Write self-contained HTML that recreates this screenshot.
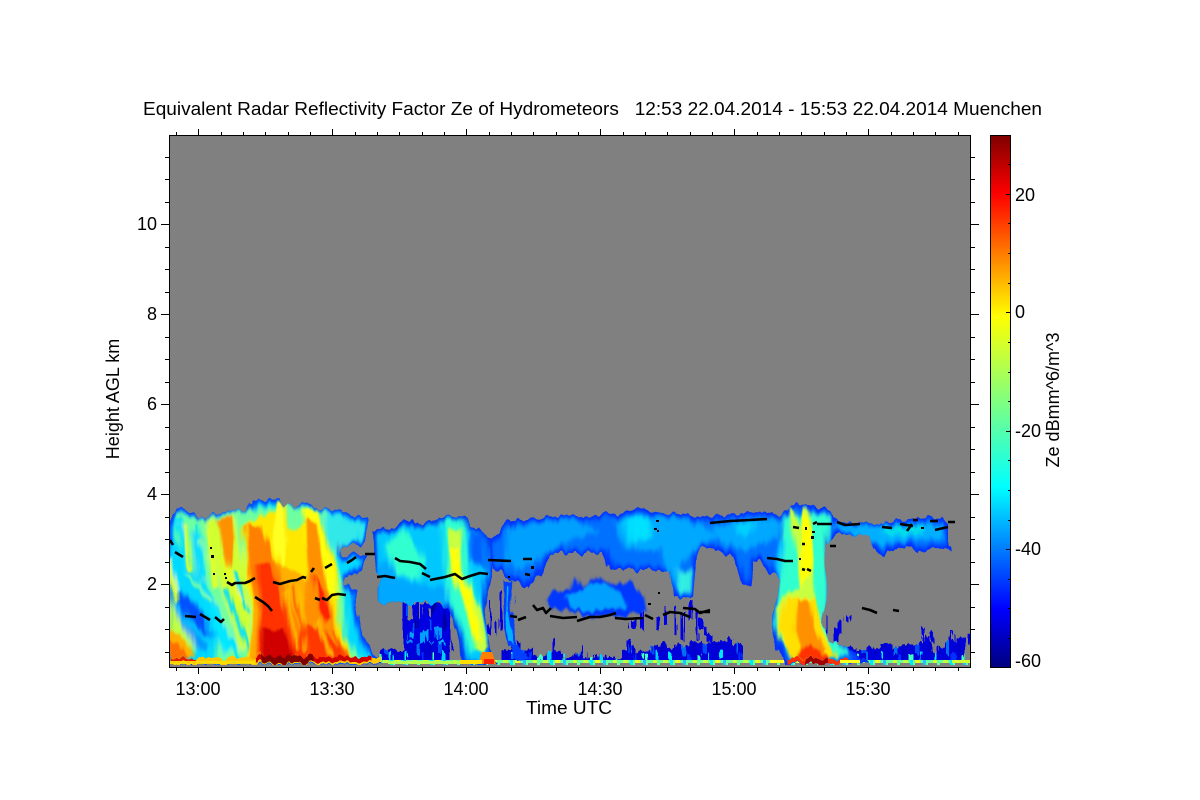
<!DOCTYPE html>
<html><head><meta charset="utf-8"><style>
html,body{margin:0;padding:0;background:#fff;width:1200px;height:800px;overflow:hidden}
svg{display:block}
text{font-family:"Liberation Sans",sans-serif;fill:#000;font-size:18px}
</style></head><body>
<svg width="1200" height="800" viewBox="0 0 1200 800" xmlns="http://www.w3.org/2000/svg">
<defs>
<linearGradient id="jet" x1="0" y1="1" x2="0" y2="0">
<stop offset="0" stop-color="#00007f"/><stop offset=".11" stop-color="#0000ff"/><stop offset=".34" stop-color="#00ffff"/><stop offset=".5" stop-color="#80ff80"/><stop offset=".66" stop-color="#ffff00"/><stop offset=".89" stop-color="#ff0000"/><stop offset="1" stop-color="#7f0000"/>
</linearGradient>
<linearGradient id="flg" gradientUnits="userSpaceOnUse" x1="0" y1="640" x2="0" y2="662">
<stop offset="0" stop-color="#0000d8"/><stop offset=".45" stop-color="#0030ff"/><stop offset=".75" stop-color="#0090ff"/><stop offset="1" stop-color="#20f0e0"/>
</linearGradient>
<filter id="b1" x="-5%" y="-5%" width="110%" height="110%"><feGaussianBlur stdDeviation="1.2"/></filter>
<filter id="b2" x="-5%" y="-5%" width="110%" height="110%"><feGaussianBlur stdDeviation="2.5"/></filter>
<filter id="er" x="-5%" y="-5%" width="110%" height="110%"><feMorphology operator="erode" radius="3"/><feGaussianBlur stdDeviation="2"/></filter>
<filter id="ds" filterUnits="userSpaceOnUse" x="169" y="480" width="801" height="190" color-interpolation-filters="sRGB">
<feTurbulence type="fractalNoise" baseFrequency="0.14 0.02" numOctaves="2" seed="7" result="n"/>
<feDisplacementMap in="SourceGraphic" in2="n" scale="11" xChannelSelector="R" yChannelSelector="G"/>
</filter>
<filter id="dn" filterUnits="userSpaceOnUse" x="169" y="590" width="801" height="80" color-interpolation-filters="sRGB">
<feTurbulence type="fractalNoise" baseFrequency="0.3 0.03" numOctaves="2" seed="3" result="n"/>
<feDisplacementMap in="SourceGraphic" in2="n" scale="9" xChannelSelector="R" yChannelSelector="G"/>
</filter>
<path id="L" d="M169,525 L172,515 L178,508 L190,511 L200,518 L208,516 L215,512 L232,511 L247,510 L252,499 L262,502 L275,497 L280,499 L285,507 L295,505 L306,503 L318,508 L335,510 L347,512 L362,516 L369,520 L366,540 L360,545 L345,545 L339,551 L342,556 L356,553 L368,557 L362,570 L348,577 L345,583 L356,590 L356,605 L358,620 L362,635 L370,648 L380,660 L380,665 L169,665 Z"/>
<path id="M" d="M372,530 L385,527 L395,528 L405,522 L413,517 L420,523 L432,521 L440,517 L463,519 L467,527 L480,529 L488,540 L490,575 L487,585 L486,620 L490,650 L498,665 L465,665 L450,610 L440,603 L405,603 L395,600 L385,605 L378,600 L375,590 L380,578 L372,575 L373,555 Z"/>
<path id="B" d="M488,540 L497,535 L507,522 L520,520 L543,517 L580,516 L623,513 L640,508 L660,512 L700,518 L720,514 L767,513 L778,516 L790,505 L810,504 L830,512 L840,522 L883,523 L900,519 L943,517 L950,525 L950,550 L935,548 L918,552 L905,545 L885,555 L876,552 L870,535 L840,535 L828,540 L825,560 L825,600 L820,622 L830,640 L850,650 L870,662 L785,665 L778,650 L772,622 L778,590 L780,582 L767,567 L755,560 L752,587 L742,582 L733,557 L712,548 L700,548 L697,553 L693,597 L673,597 L670,570 L612,570 L603,553 L553,553 L543,568 L530,590 L520,582 L505,575 L490,568 Z"/>
<clipPath id="cL"><use href="#L"/></clipPath>
<clipPath id="cM"><use href="#M"/></clipPath>
<clipPath id="cB"><use href="#B"/></clipPath>
<clipPath id="plot"><rect x="169" y="135" width="801" height="530"/></clipPath>
<pattern id="sp" x="403" y="603" width="46" height="48" patternUnits="userSpaceOnUse">
<rect width="46" height="48" fill="#0000e0"/>
<rect x="6" y="0" width="3" height="16" fill="#808080"/><rect x="15" y="0" width="3" height="14" fill="#808080"/><rect x="27" y="6" width="2" height="8" fill="#808080"/>
<rect x="3" y="4" width="3" height="9" fill="#0050ff"/><rect x="9" y="20" width="3" height="14" fill="#0050ff"/><rect x="18" y="28" width="6" height="12" fill="#00a0ff"/><rect x="27" y="16" width="3" height="10" fill="#0050ff"/><rect x="33" y="24" width="4" height="12" fill="#0090ff"/><rect x="40" y="6" width="3" height="20" fill="#0000a0"/><rect x="6" y="30" width="6" height="6" fill="#00a0ff"/><rect x="30" y="0" width="3" height="8" fill="#0000a0"/><rect x="12" y="18" width="3" height="8" fill="#0000a0"/><rect x="36" y="38" width="6" height="10" fill="#00b0ff"/><rect x="3" y="38" width="6" height="10" fill="#0090ff"/><rect x="26" y="40" width="5" height="8" fill="#00d0ff"/>
</pattern>
<pattern id="fl" x="500" y="640" width="53" height="24" patternUnits="userSpaceOnUse">
<rect width="53" height="24" fill="url(#flg)"/>
<rect x="3" y="0" width="3" height="13" fill="#0000c8" opacity=".75"/><rect x="13" y="2" width="3" height="12" fill="#0000e0" opacity=".7"/><rect x="23" y="0" width="3" height="15" fill="#00a0ff" opacity=".7"/><rect x="33" y="4" width="3" height="13" fill="#0000c8" opacity=".75"/><rect x="43" y="0" width="4" height="14" fill="#0060ff" opacity=".8"/><rect x="9" y="12" width="3" height="8" fill="#00e8ff"/><rect x="28" y="13" width="3" height="8" fill="#0030ff"/><rect x="38" y="14" width="3" height="8" fill="#40ffc0"/><rect x="48" y="12" width="3" height="9" fill="#00d0ff"/>
</pattern>
<pattern id="gr" x="500" y="660" width="40" height="5" patternUnits="userSpaceOnUse">
<rect width="40" height="5" fill="#60ffa0"/>
<rect x="3" width="5" height="3" fill="#c0ff40"/><rect x="10" width="3" height="5" fill="#00e8ff"/><rect x="15" width="5" height="3" fill="#e8ff20"/><rect x="23" width="3" height="5" fill="#20c0ff"/><rect x="0" y="3" width="10" height="2" fill="#808080"/><rect x="15" y="3" width="8" height="2" fill="#808080"/><rect x="28" y="3" width="9" height="2" fill="#808080"/><rect x="33" width="4" height="3" fill="#d0ff30"/>
</pattern>
</defs>
<rect width="1200" height="800" fill="#fff"/>
<rect x="169" y="135" width="801" height="532" fill="#808080"/>
<g clip-path="url(#plot)">

<!-- bottom noise -->
<g filter="url(#dn)">
<path fill="url(#sp)" d="M403,603 H449 L452,652 H403 Z"/>
<path fill="url(#fl)" d="M380,650 H405 V644 H450 V662 H380 Z"/>
<path fill="url(#fl)" d="M503,650 h6 v-4 h6 v-4 h6 v8 h12 v6 h14 v-3 h16 v5 h12 v-5 h8 v5 h12 v-3 h10 v3 h18 v-8 h6 v-3 h6 v5 h16 v-5 h10 v-4 h6 v5 h8 v-3 h14 v-3 h12 v2 h8 v-2 h18 v-4 h6 v6 h10 V663 H503 Z"/>
<path fill="url(#fl)" d="M835,647 h20 v4 h12 v-3 h14 v-4 h10 v4 h8 v-4 h16 v-1 h6 v-5 h4 v5 h6 v10 h6 v-6 h8 v-6 h4 v-4 h3 v4 h4 v-4 h8 V663 H835 Z"/>
<g fill="#0000e0">
<rect x="950" y="630" width="3" height="17"/><rect x="962" y="636" width="3" height="10"/><rect x="968" y="634" width="2" height="12"/><rect x="922" y="628" width="3" height="15"/><rect x="926" y="636" width="3" height="8"/><rect x="930" y="632" width="3" height="12"/>
<rect x="838" y="620" width="3" height="14"/><rect x="834" y="628" width="4" height="12"/><rect x="846" y="616" width="3" height="6"/><rect x="826" y="616" width="2" height="24"/>
<rect x="700" y="620" width="3" height="10"/><rect x="704" y="625" width="3" height="10"/><rect x="706" y="634" width="6" height="8"/><rect x="690" y="600" width="2" height="20"/><rect x="696" y="610" width="3" height="30"/><rect x="682" y="612" width="2" height="28"/><rect x="675" y="605" width="2" height="30"/><rect x="656" y="616" width="3" height="14"/><rect x="665" y="605" width="2" height="20"/>
<rect x="552" y="640" width="3" height="15"/><rect x="582" y="645" width="3" height="15"/><rect x="494" y="620" width="3" height="14"/><rect x="489" y="600" width="2" height="34"/><rect x="500" y="590" width="2" height="40"/>
<rect x="627" y="640" width="4" height="15"/><rect x="640" y="612" width="3" height="18"/><rect x="630" y="620" width="6" height="8"/>
<rect x="934" y="568" width="7" height="8"/><rect x="938" y="560" width="3" height="12"/>
</g>
</g>
<rect x="380" y="660" width="590" height="5" fill="url(#gr)"/>

<g filter="url(#ds)">
<!-- LEFT BLOCK -->
<use href="#L" fill="#0040ff"/>
<g clip-path="url(#cL)">
<use href="#L" fill="#00d8ff" filter="url(#er)"/>
<g filter="url(#b2)">
<path fill="#70ffa0" d="M178,512 L200,520 L215,515 L250,510 L285,505 L320,510 L360,525 L345,540 L335,560 L345,580 L345,640 L365,660 L215,662 L218,610 L200,585 L190,560 L175,540 Z"/>
<path fill="#30e8e8" d="M325,512 L365,522 L360,540 L342,545 L335,555 L325,535 Z"/>
<path fill="#00d8ff" d="M190,530 L200,535 L208,590 L198,580 Z"/>
<path fill="#0050ff" d="M176,588 L188,598 L200,610 L213,625 L216,640 L200,632 L185,615 L176,600 Z"/>
<path fill="#0098ff" d="M172,600 L190,628 L210,645 L205,652 L185,640 L172,620 Z"/>
<path fill="#00e8ff" d="M208,600 L225,625 L240,650 L225,652 L208,630 Z"/>
<path fill="#d0ff30" d="M205,520 L235,516 L250,580 L250,650 L240,650 L225,600 L212,560 Z"/>
<path fill="#c0ff40" d="M169,590 L175,610 L195,650 L175,660 L169,660 Z"/>
</g>
<g filter="url(#b1)" fill="none" stroke-linecap="round">
<path stroke="#00e0ff" stroke-width="4" d="M178,520L186,575M196,525L204,575M172,545L178,590M226,590L250,655M205,585L240,660M235,570L246,610"/>
<path stroke="#e8ff20" stroke-width="4" d="M183,525L192,570M208,530L216,585M170,560L176,600M224,560L240,600M250,560L254,640"/>
<path stroke="#80ffa0" stroke-width="3" d="M200,540L208,560M190,575L210,600M215,600L232,640"/>
</g>
<g filter="url(#b1)">
<path fill="#ffe800" d="M243,525 L285,505 L290,530 L320,515 L335,570 L338,620 L348,650 L355,662 L245,662 L255,620 L248,575 Z"/>
<path fill="#ffff10" d="M300,510 L318,510 L330,560 L338,600 L330,590 L305,545 Z"/>
<path fill="#ffff20" d="M276,500 L284,505 L288,540 L280,570 L274,540 Z"/>
<path fill="#ff9000" d="M218,518 L232,516 L234,540 L228,570 L222,545 Z"/>
<path fill="#ffb000" d="M255,550 L290,570 L330,590 L340,640 L350,662 L250,662 Z"/>
<path fill="#ff8000" d="M245,525 L262,525 L278,570 L297,620 L302,660 L255,660 L258,610 L250,570 Z"/>
<path fill="#ff9000" d="M303,520 L316,520 L325,580 L340,640 L352,660 L295,660 L305,600 L310,570 Z"/>
<path fill="#ff3000" d="M255,565 L270,565 L287,610 L298,655 L258,655 L262,610 Z"/>
<path fill="#ff2000" d="M313,575 L324,590 L332,620 L326,625 L318,610 Z"/>
<path fill="#ff3800" d="M300,625 L322,628 L350,660 L295,660 Z"/>
<path fill="#d00000" d="M262,628 L285,628 L296,662 L262,662 Z"/>
<path fill="#ffb000" d="M169,628 L180,635 L195,655 L169,660 Z"/>
<path fill="#ff7000" d="M169,640 L178,643 L190,658 L169,660 Z"/>
<path fill="none" stroke="#ffc000" stroke-width="3" d="M285,590L297,650M300,590L305,650M318,620L330,655"/>
<path fill="none" stroke="#ff5000" stroke-width="3" d="M292,585L310,660M335,630L345,658"/>
</g>
<rect x="169" y="658" width="211" height="6" fill="#ffc800"/>
<rect x="169" y="658" width="28" height="4" fill="#e02000"/>
<rect x="255" y="657" width="117" height="5" fill="#d00000"/>
<rect x="262" y="656" width="50" height="7" fill="#800000"/>
</g>

<!-- MIDDLE BLOCK -->
<use href="#M" fill="#0030f0"/>
<g clip-path="url(#cM)">
<use href="#M" fill="#00c8ff" filter="url(#er)"/>
<g filter="url(#b2)">
<path fill="#00a8ff" d="M372,575 L385,560 L400,580 L425,585 L450,590 L445,610 L378,610 Z"/>
<path fill="#30ffd0" d="M385,545 L405,530 L425,560 L420,580 L395,575 Z"/>
<path fill="#30ffd0" d="M440,520 L462,522 L470,575 L488,640 L470,655 L450,600 Z"/>
<path fill="#0060ff" d="M468,530 L485,535 L485,570 L470,560 Z"/>
</g>
<g filter="url(#b1)">
<path fill="#c8ff40" d="M447,530 L460,530 L463,570 L480,610 L488,650 L476,650 L462,600 L450,575 Z"/>
<path fill="#ffff00" d="M450,548 L458,548 L460,575 L470,590 L480,640 L474,640 L465,600 L454,575 Z"/>
</g>
</g>

<!-- BAND -->
<use href="#B" fill="#0030ff"/>
<g clip-path="url(#cB)">
<use href="#B" fill="#0070ff" filter="url(#er)"/>
<g filter="url(#b2)">
<path fill="#00a0ff" d="M505,530 L540,522 L575,520 L600,530 L560,545 L520,570 L505,560 Z"/>
<path fill="#00a8ff" d="M615,520 L660,515 L700,525 L720,535 L700,545 L680,565 L690,595 L675,590 L660,550 L625,550 Z"/>
<path fill="#00e0ff" d="M625,518 L648,515 L650,535 L630,545 Z"/>
<path fill="#30f0e0" d="M678,568 L692,572 L690,592 L678,590 Z"/>
<path fill="#00a8ff" d="M710,525 L780,520 L775,540 L745,550 L725,545 Z"/>
<path fill="#00d0ff" d="M735,522 L755,522 L750,535 L738,535 Z"/>
<path fill="#00b0ff" d="M835,525 L945,525 L945,540 L905,540 L880,545 L840,530 Z"/>
<path fill="#00e0e8" d="M880,525 L925,525 L920,534 L885,534 Z"/>
<path fill="#30ffd0" d="M782,515 L830,515 L825,590 L828,630 L850,655 L795,662 L774,625 L778,590 Z"/>
<path fill="#00c0ff" d="M778,540 L785,540 L780,585 L775,570 Z"/>
</g>
<g filter="url(#b1)">
<path fill="#c8ff40" d="M788,506 L795,510 L800,526 L806,505 L812,512 L812,565 L816,600 L820,625 L836,655 L800,662 L780,640 L776,610 L785,595 L798,590 L797,560 Z"/>
<path fill="#ffff00" d="M805,510 L812,520 L811,570 L800,590 Z"/>
<path fill="#ffe000" d="M786,598 L816,598 L820,630 L838,656 L792,660 L779,628 Z"/>
<path fill="#ff9000" d="M797,600 L810,600 L812,628 L826,650 L806,658 L796,630 Z"/>
<path fill="#ff3000" d="M803,645 L820,650 L832,660 L796,660 Z"/>
</g>
<rect x="788" y="659" width="60" height="5" fill="#ff3000"/>
<rect x="806" y="659" width="22" height="5" fill="#a00000"/>
</g>

<!-- vertical stripe + mid patch -->
<path fill="#0040ff" d="M503,580 L515,580 L512,610 L518,645 L528,660 L512,660 L504,625 Z"/>
<path fill="#00b0ff" d="M507,585 L511,585 L509,612 L514,645 L509,640 L506,620 Z"/>
<g filter="url(#b1)">
<path fill="#0038ff" d="M545,600 L553,590 L570,590 L576,575 L585,588 L600,577 L615,585 L632,582 L645,598 L647,612 L590,618 L575,612 L550,608 Z"/>
<path fill="#00a0ff" d="M565,597 L580,590 L605,582 L622,595 L628,605 L590,612 L570,607 Z"/>
</g>
</g>
<rect x="169" y="661" width="86" height="3" fill="#ffe000" opacity=".9"/>
<rect x="952" y="660" width="18" height="3" fill="#d0ff30"/>
<path fill="#ff8000" d="M482,652 L492,652 L496,664 L478,664 Z"/>
<path fill="#ff2000" d="M484,659 L494,659 L494,664 L484,664 Z"/>
<rect x="460" y="660" width="22" height="4" fill="#ffe000"/>
<rect x="388" y="661" width="72" height="3" fill="#b0ff50"/>
<rect x="770" y="660" width="14" height="3" fill="#ffff20"/>
<rect x="840" y="660" width="20" height="3" fill="#ffff20"/>

<!-- black melting layer -->
<g fill="none" stroke="#000" stroke-width="2.6" stroke-linejoin="round">
<path d="M170,540L173,545M175,552L183,557M227,582L232,585L235,583L245,583L250,581L255,578M273,582L280,584L290,581L297,580L303,577L306,578M311,572L314,568M325,568L332,564M255,597L263,602L268,606L272,611M315,598L320,600M322,598L327,600L332,595L338,594L346,595M185,616L196,617M200,614L210,620M215,617L221,622L224,619M347,563L352,560L356,557M365,554L375,554M395,558L400,561L410,562L420,564L426,569M422,573L430,577M430,580L445,577L455,574L462,579L470,576L480,573L488,574M377,577L385,576L395,578M488,560L511,561M523,559L532,559M525,574L530,575M510,616L517,617M518,620L526,617M533,605L537,610L543,608L546,613L551,608M550,616L563,618L577,617M577,621L590,617L600,617L610,615L616,613M615,618L625,619L643,618M645,615L653,619M663,615L670,612L680,613L690,617M683,608L695,609L700,613L710,610M700,612L710,612M710,523L730,521L750,520L767,519M767,558L777,559L785,561L793,561M793,527L799,528M813,524L817,522M817,524L832,524M837,522L845,525L860,524M882,527L892,528M900,524L913,526M907,531L912,524M913,520L918,520M930,521L938,521M948,522L955,522M935,530L948,527M802,569L805,570M807,569L811,571M802,544L805,544M830,546L836,546M862,608L870,610L877,613M893,610L899,611"/>
</g>
<g fill="#000">
<rect x="210" y="547" width="2" height="2"/><rect x="211" y="555" width="3" height="3"/><rect x="213" y="573" width="2" height="2"/><rect x="224" y="573" width="2" height="2"/><rect x="225" y="577" width="2" height="2"/><rect x="531" y="566" width="3" height="3"/><rect x="508" y="576" width="2" height="2"/><rect x="656" y="520" width="3" height="2"/><rect x="654" y="528" width="3" height="2"/><rect x="657" y="530" width="2" height="2"/><rect x="648" y="603" width="3" height="2"/><rect x="658" y="592" width="2" height="2"/><rect x="805" y="527" width="2" height="3"/><rect x="799" y="558" width="2" height="2"/><rect x="811" y="536" width="3" height="3"/><rect x="812" y="531" width="3" height="2"/><rect x="921" y="527" width="3" height="2"/>
</g>
</g>

<!-- frame + ticks -->
<rect x="169.5" y="135.5" width="801" height="532" fill="none" stroke="#000"/>
<path stroke="#000" fill="none" shape-rendering="crispEdges" d="M198.5,135V129M332.5,135V129M466.5,135V129M600.5,135V129M734.5,135V129M868.5,135V129M176.5,135V132M221.5,135V132M243.5,135V132M265.5,135V132M288.5,135V132M310.5,135V132M355.5,135V132M377.5,135V132M399.5,135V132M422.5,135V132M444.5,135V132M489.5,135V132M511.5,135V132M533.5,135V132M556.5,135V132M578.5,135V132M623.5,135V132M645.5,135V132M667.5,135V132M690.5,135V132M712.5,135V132M757.5,135V132M779.5,135V132M801.5,135V132M824.5,135V132M846.5,135V132M891.5,135V132M913.5,135V132M935.5,135V132M958.5,135V132
M198.5,668V674M332.5,668V674M466.5,668V674M600.5,668V674M734.5,668V674M868.5,668V674M176.5,668V671M221.5,668V671M243.5,668V671M265.5,668V671M288.5,668V671M310.5,668V671M355.5,668V671M377.5,668V671M399.5,668V671M422.5,668V671M444.5,668V671M489.5,668V671M511.5,668V671M533.5,668V671M556.5,668V671M578.5,668V671M623.5,668V671M645.5,668V671M667.5,668V671M690.5,668V671M712.5,668V671M757.5,668V671M779.5,668V671M801.5,668V671M824.5,668V671M846.5,668V671M891.5,668V671M913.5,668V671M935.5,668V671M958.5,668V671
M169,224.5H161M169,314.5H161M169,404.5H161M169,494.5H161M169,584.5H161M169,157.5H165M169,179.5H165M169,202.5H165M169,247.5H165M169,269.5H165M169,292.5H165M169,337.5H165M169,359.5H165M169,382.5H165M169,427.5H165M169,449.5H165M169,472.5H165M169,517.5H165M169,539.5H165M169,562.5H165M169,607.5H165M169,629.5H165M169,652.5H165
M971,224.5H979M971,314.5H979M971,404.5H979M971,494.5H979M971,584.5H979M971,157.5H975M971,179.5H975M971,202.5H975M971,247.5H975M971,269.5H975M971,292.5H975M971,337.5H975M971,359.5H975M971,382.5H975M971,427.5H975M971,449.5H975M971,472.5H975M971,517.5H975M971,539.5H975M971,562.5H975M971,607.5H975M971,629.5H975M971,652.5H975"/>

<!-- colorbar -->
<rect x="990.5" y="135.5" width="20" height="532" fill="url(#jet)" stroke="#000"/>
<path stroke="#000" shape-rendering="crispEdges" d="M1008,164.5h2M1006,194.5h4M1008,223.5h2M1008,253.5h2M1008,283.5h2M1006,312.5h4M1008,342.5h2M1008,372.5h2M1008,401.5h2M1006,431.5h4M1008,460.5h2M1008,490.5h2M1008,520.5h2M1006,549.5h4M1008,579.5h2M1008,608.5h2M1008,638.5h2"/>

<!-- text -->
<text x="143" y="115" xml:space="preserve" textLength="899" lengthAdjust="spacingAndGlyphs">Equivalent Radar Reflectivity Factor Ze of Hydrometeors   12:53 22.04.2014 - 15:53 22.04.2014 Muenchen</text>
<g text-anchor="end">
<text x="157" y="230">10</text><text x="157" y="320">8</text><text x="157" y="410">6</text><text x="157" y="500">4</text><text x="157" y="590">2</text>
</g>
<g text-anchor="middle">
<text x="198" y="695">13:00</text><text x="332" y="695">13:30</text><text x="466" y="695">14:00</text><text x="600" y="695">14:30</text><text x="734" y="695">15:00</text><text x="868" y="695">15:30</text>
</g>
<text x="526" y="714" textLength="86" lengthAdjust="spacingAndGlyphs">Time UTC</text>
<g text-anchor="middle">
<text transform="translate(119,399) rotate(-90)">Height AGL km</text>
<text transform="translate(1059,400) rotate(-90)">Ze dBmm^6/m^3</text>
</g>
<text x="1015" y="201">20</text><text x="1015" y="318">0</text><text x="1015" y="437">-20</text><text x="1015" y="555">-40</text><text x="1015" y="667">-60</text>
</svg>
</body></html>
